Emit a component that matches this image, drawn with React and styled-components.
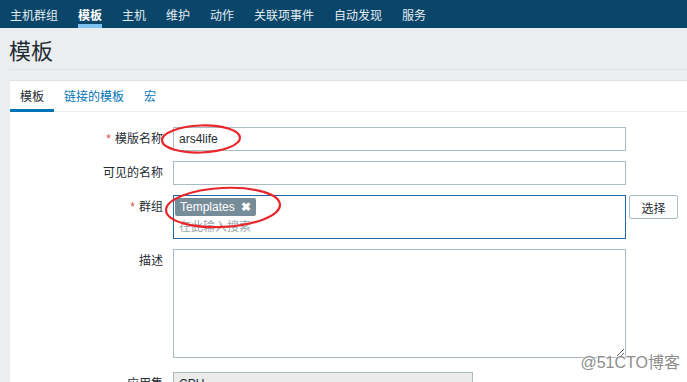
import React from 'react';
import styled, { createGlobalStyle } from 'styled-components';

const GlobalStyle = createGlobalStyle`
    html, body {
        margin: 0;
        padding: 0;
        background: #ebeef0;
        overflow: hidden;
    }
    body {
        font-family: "Liberation Sans", Arial, "Noto Sans CJK SC", sans-serif;
        font-size: 12px;
        color: #1f2c33;
    }
`

const Page = styled('div')`
    position: relative;
    width: 687px;
    height: 382px;
    overflow: hidden;
`

const TopNav = styled('nav')`
    display: flex;
    height: 28px;
    background: #0a466a;
    padding-left: 0;
`

const NavItem = styled('div')`
    display: flex;
    align-items: center;
    padding: 0 10px;
    color: ${props => props.active ? '#ffffff' : '#e3ecf1'};
    font-size: 12px;
    font-weight: ${props => props.active ? 'bold' : 'normal'};
    position: relative;

    &::after {
        content: '';
        display: ${props => props.active ? 'block' : 'none'};
        position: absolute;
        left: 10px;
        right: 10px;
        bottom: 0;
        height: 4px;
        background: #7ec3ef;
    }
`

const Header = styled('div')`
    margin: 0 0 0 9px;
    height: 41px;
    border-bottom: 1px solid #dce2e5;
    display: flex;
    align-items: center;
`

const Title = styled('h1')`
    margin: 0;
    font-size: 22px;
    font-weight: normal;
    color: #1f2c33;
`

const Panel = styled('div')`
    margin: 10px 0 0 10px;
    background: #ffffff;
    border-top: 1px solid #dce2e5;
    height: 400px;
`

const Tabs = styled('div')`
    display: flex;
    height: 30px;
    border-bottom: 1px solid #ebeef0;
`

const Tab = styled('div')`
    display: flex;
    align-items: center;
    padding: 0 10px;
    color: ${props => props.active ? '#1f2c33' : '#0275b8'};
    border-bottom: 3px solid ${props => props.active ? '#0275b8' : 'transparent'};
    margin-bottom: -1px;
`

const Form = styled('div')`
    display: grid;
    grid-template-columns: 153px 453px auto;
    column-gap: 10px;
    row-gap: 10px;
    padding-top: 15px;
    align-items: start;
`

const Label = styled('div')`
    text-align: right;
    line-height: 24px;
    color: #1f2c33;
`

const Req = styled('span')`
    color: #d64e4e;
    margin-right: 4px;
`

const TextBox = styled('div')`
    box-sizing: border-box;
    height: 24px;
    border: 1px solid #acbbc2;
    padding: 0 5px;
    line-height: 22px;
    background: ${props => props.disabled ? '#ebebeb' : '#ffffff'};
    width: ${props => props.narrow ? '300px' : '453px'};
`

const Side = styled('div')`
    margin-left: -7px;
`

const MultiSelect = styled('div')`
    box-sizing: border-box;
    height: 44px;
    border: 1px solid #1f65a4;
    padding: 2px 1px;
`

const Tag = styled('span')`
    display: inline-flex;
    align-items: center;
    gap: 6px;
    height: 18px;
    padding: 0 5px;
    background: #768d99;
    color: #ffffff;
    border-radius: 2px;
    font-size: 12px;
`

const TagX = styled('span')`
    font-weight: bold;
    font-size: 12px;
`

const Placeholder = styled('div')`
    margin: 1px 0 0 4px;
    color: #9aa6ac;
`

const SelectButton = styled('button')`
    box-sizing: border-box;
    width: 49px;
    height: 24px;
    background: #ffffff;
    border: 1px solid #acbbc2;
    border-radius: 2px;
    font-family: inherit;
    font-size: 12px;
    color: #1f2c33;
    padding: 0;
`

const TextArea = styled('textarea')`
    box-sizing: border-box;
    display: block;
    width: 453px;
    height: 109px;
    border: 1px solid #acbbc2;
    margin: 0 0 4px;
    resize: vertical;
    outline: none;
`

const Marks = styled('svg')`
    position: absolute;
    left: 0;
    top: 0;
    pointer-events: none;
`

const Watermark = styled('div')`
    position: absolute;
    right: 7px;
    bottom: 9px;
    font-size: 16px;
    color: #8d8d8d;
    text-shadow: 0 0 2px #ffffff, 0 0 2px #ffffff;
`

const navItems = ['主机群组', '模板', '主机', '维护', '动作', '关联项事件', '自动发现', '服务'];

function App() {
    return (
        <Page>
            <GlobalStyle />
            <TopNav>
                {navItems.map(item => (
                    <NavItem key={item} active={item === '模板'}>{item}</NavItem>
                ))}
            </TopNav>
            <Header>
                <Title>模板</Title>
            </Header>
            <Panel>
                <Tabs>
                    <Tab active>模板</Tab>
                    <Tab>链接的模板</Tab>
                    <Tab>宏</Tab>
                </Tabs>
                <Form>
                    <Label><Req>*</Req>模版名称</Label>
                    <TextBox>ars4life</TextBox>
                    <div />

                    <Label>可见的名称</Label>
                    <TextBox />
                    <div />

                    <Label><Req>*</Req>群组</Label>
                    <MultiSelect>
                        <Tag>Templates <TagX>✖</TagX></Tag>
                        <Placeholder>在此输入搜索</Placeholder>
                    </MultiSelect>
                    <Side><SelectButton>选择</SelectButton></Side>

                    <Label>描述</Label>
                    <TextArea />
                    <div />

                    <Label>应用集</Label>
                    <TextBox disabled narrow>CPU</TextBox>
                    <div />
                </Form>
            </Panel>
            <Marks width="687" height="382">
                <ellipse cx="201" cy="139" rx="39" ry="13.5" fill="none" stroke="#e8262b" strokeWidth="2.2" transform="rotate(-2 201 139)" />
                <ellipse cx="223" cy="207.5" rx="57" ry="19.5" fill="none" stroke="#e8262b" strokeWidth="2.2" transform="rotate(-3 223 207)" />
            </Marks>
            <Watermark>@51CTO博客</Watermark>
        </Page>
    );
}

export default App;
